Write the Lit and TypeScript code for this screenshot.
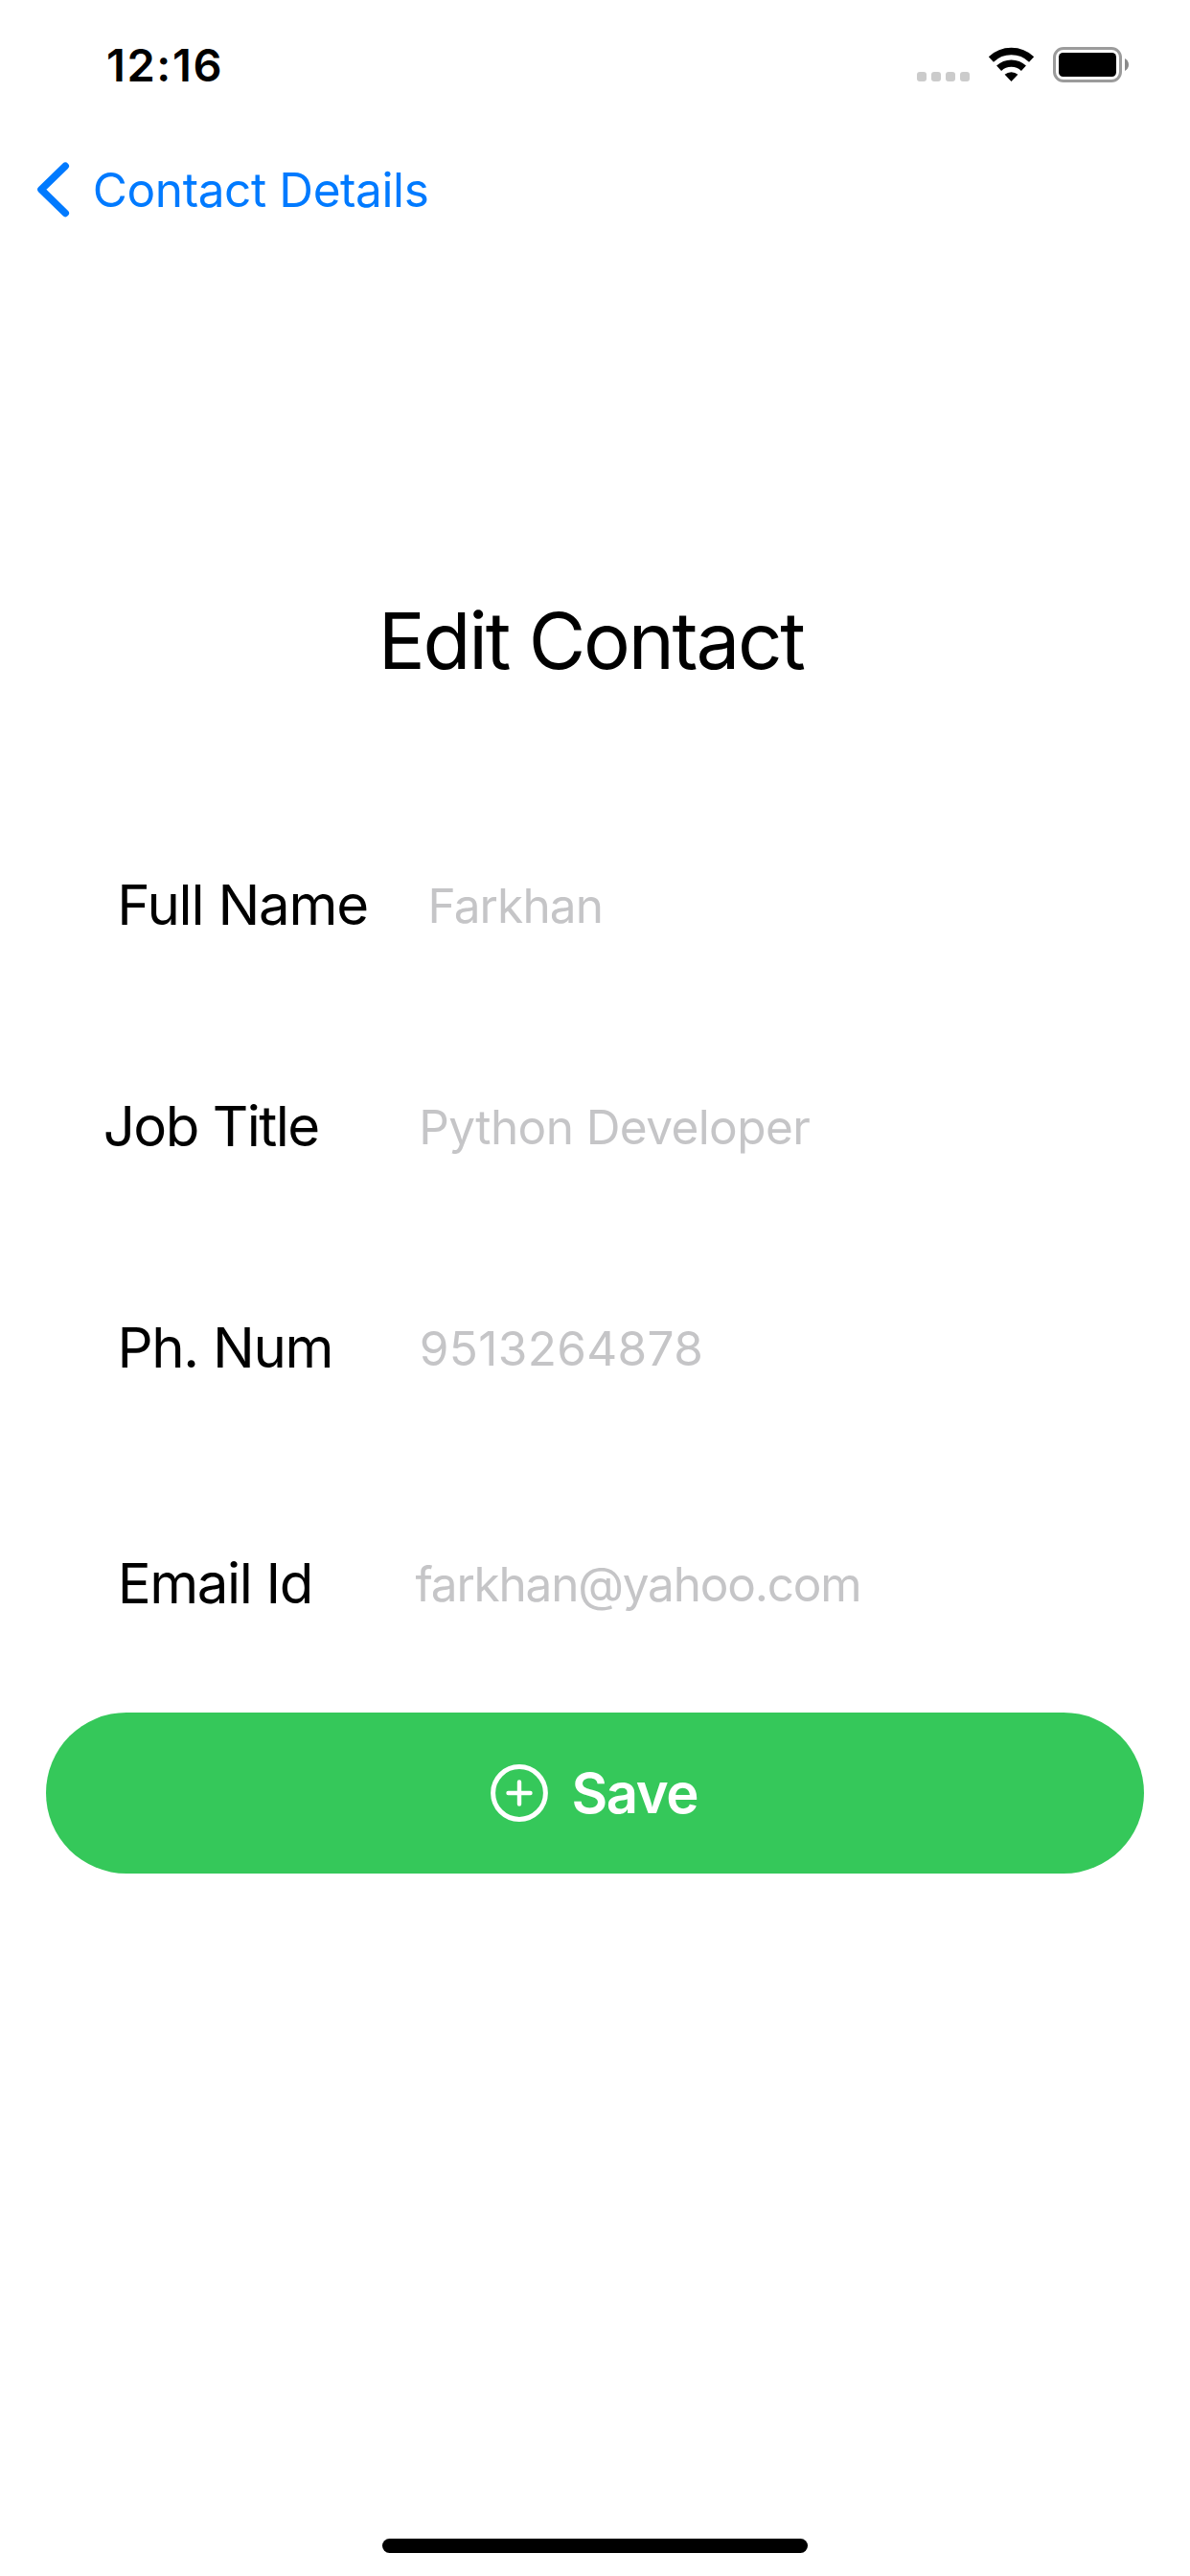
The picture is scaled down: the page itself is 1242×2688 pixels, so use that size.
import { LitElement, html, css } from "lit";
import { customElement, property } from "lit/decorators.js";

@customElement("status-bar")
class StatusBar extends LitElement {
  static styles = css`
    :host { display: flex; align-items: center; justify-content: space-between; height: 136px; padding: 0 64px 0 111px; box-sizing: border-box; }
    .time { font-size: 47px; font-weight: 600; line-height: 60px; letter-spacing: 1.6px; }
    .icons { display: block; width: 222px; height: 38px; }
  `;
  render() {
    return html`
      <span class="time">12:16</span>
      <svg class="icons" viewBox="956 49 222 38">
        <g fill="#cbcbcb">
          <rect x="957" y="75" width="10" height="10" rx="3"/>
          <rect x="972" y="75" width="10" height="10" rx="3"/>
          <rect x="987" y="75" width="10" height="10" rx="3"/>
          <rect x="1002" y="75" width="10" height="10" rx="3"/>
        </g>
        <path d="M1055.5 85 L1048.6 77.8 A10.5 10.5 0 0 1 1062.4 77.8 Z"/>
        <g fill="none" stroke="#000" stroke-width="7.4">
          <path d="M1042.6 71.2 A19 19 0 0 1 1068.4 71.2"/>
          <path d="M1034.4 62 A30.5 30.5 0 0 1 1076.6 62"/>
        </g>
        <rect x="1100.5" y="50.5" width="69" height="34" rx="9.5" fill="none" stroke="#9b9b9b" stroke-width="3"/>
        <rect x="1105" y="55" width="60" height="25" rx="4.5"/>
        <path d="M1174 61 C1179.3 63.4 1179.3 71.6 1174 74 Z" fill="#8a8a8a"/>
      </svg>
    `;
  }
}

@customElement("form-row")
class FormRow extends LitElement {
  @property() label = "";
  @property() value = "";
  static styles = css`
    :host { display: flex; align-items: center; height: 72px; white-space: nowrap; }
    .label { font-size: 58.2px; line-height: 72px; width: var(--label-width); letter-spacing: var(--label-spacing); flex: none; }
    .value { font-size: 49.5px; line-height: 60px; color: #c5c5c7; letter-spacing: var(--value-spacing); padding-top: 2px; }
  `;
  render() {
    return html`<span class="label">${this.label}</span><span class="value">${this.value}</span>`;
  }
}

@customElement("app-root")
class AppRoot extends LitElement {
  static styles = css`
    :host { display: flex; flex-direction: column; width: 1242px; height: 2688px; box-sizing: border-box; background: #fff; color: #000; font-family: Inter, "Liberation Sans", sans-serif; overflow: hidden; }
    .nav { display: flex; align-items: center; height: 124px; padding-left: 38px; color: #007aff; }
    .chevron { display: block; width: 36px; height: 60px; margin-right: 22.8px; }
    .back { font-size: 49.5px; line-height: 60px; letter-spacing: -0.4px; }
    .title { margin: 359px 0 0; padding-right: 8.5px; font-size: 81.6px; font-weight: 400; line-height: 100px; text-align: center; letter-spacing: -2.3px; }
    .form { display: flex; flex-direction: column; padding-top: 189px; }
    .full { margin-left: 122.3px; --label-width: 324.3px; --label-spacing: -1.24px; --value-spacing: -0.9px; }
    .job { margin: 159px 0 0 107.7px; --label-width: 329.6px; --label-spacing: -1.53px; --value-spacing: -0.58px; }
    .phone { margin: 159px 0 0 122.4px; --label-width: 315.4px; --label-spacing: -1.3px; --value-spacing: 0.34px; }
    .email { margin: 174px 0 0 122.7px; --label-width: 310.8px; --label-spacing: -1.4px; --value-spacing: -1.22px; }
    .save { display: flex; align-items: center; justify-content: center; height: 168px; margin: 99px 48px 0; padding: 0 2px 0 0; border: 0; border-radius: 84px; background: #35c85a; color: #fff; font-family: inherit; font-size: 58px; font-weight: 600; letter-spacing: -1.4px; gap: 24.6px; }
    .plus { display: block; width: 60px; height: 60px; }
    .home { width: 444px; height: 15px; border-radius: 7.5px; background: #000; margin: auto auto 24px; }
  `;
  render() {
    return html`
      <status-bar></status-bar>
      <nav class="nav">
        <svg class="chevron" viewBox="38 168 36 60" fill="none" stroke="currentColor" stroke-width="7.6" stroke-linecap="round" stroke-linejoin="round">
          <path d="M68.2 173.3 L43 197.8 L68.2 222.4"/>
        </svg>
        <span class="back">Contact Details</span>
      </nav>
      <h1 class="title">Edit Contact</h1>
      <div class="form">
        <form-row class="full" label="Full Name" value="Farkhan"></form-row>
        <form-row class="job" label="Job Title" value="Python Developer"></form-row>
        <form-row class="phone" label="Ph. Num" value="9513264878"></form-row>
        <form-row class="email" label="Email Id" value="farkhan@yahoo.com"></form-row>
      </div>
      <button class="save">
        <svg class="plus" viewBox="0 0 60 60" fill="none" stroke="#fff" stroke-linecap="round">
          <circle cx="30" cy="30" r="27.4" stroke-width="5"/>
          <path d="M18.5 30 H41.5 M30 18.5 V41.5" stroke-width="4.4"/>
        </svg>
        <span>Save</span>
      </button>
      <div class="home"></div>
    `;
  }
}
